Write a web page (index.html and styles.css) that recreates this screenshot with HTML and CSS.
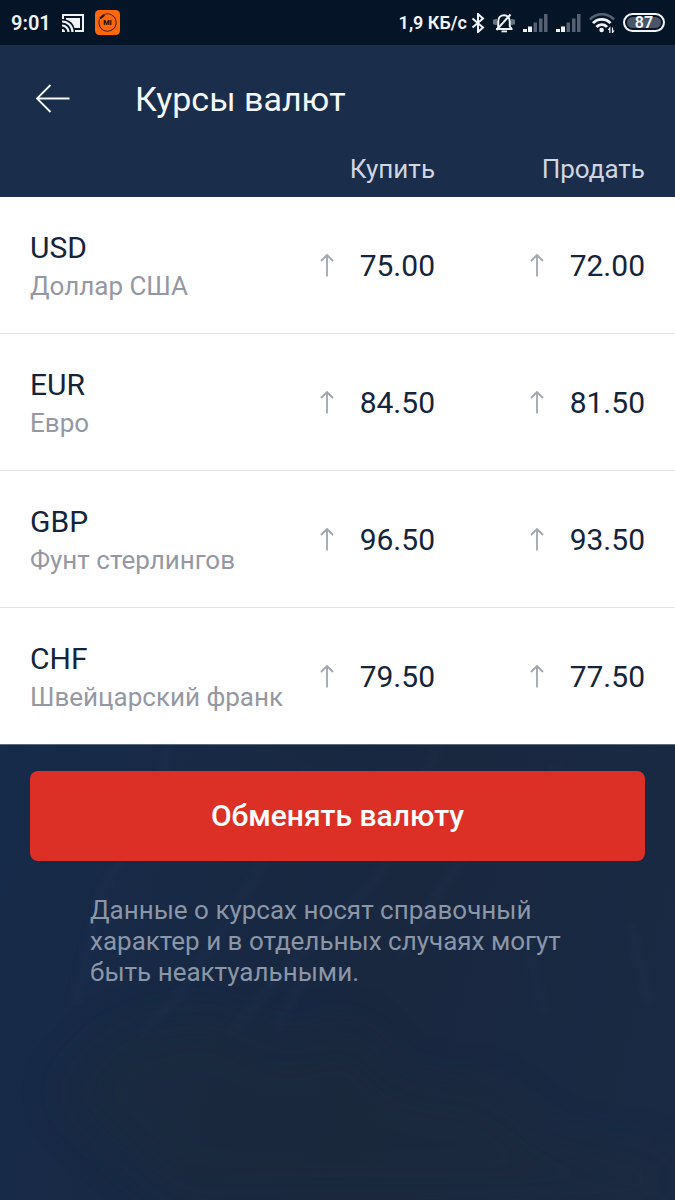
FILE: index.html
```html
<!DOCTYPE html>
<html lang="ru">
<head>
<meta charset="utf-8">
<meta name="viewport" content="width=device-width, initial-scale=1">
<title>Курсы валют</title>
<link rel="stylesheet" href="styles.css">
</head>
<body>
<svg class="symbols" aria-hidden="true">
  <symbol id="up" viewBox="0 0 14 24"><path d="M7 22.500V1.500M1 7l6-6 6 6" fill="none" stroke="currentColor" stroke-width="1.800"/></symbol>
  <symbol id="signal" viewBox="0 0 25 18">
    <path d="M0 15h4v3H0zM5 12.500h4V18H5z" fill="#f0f4fa"/>
    <path d="M10.500 8.500h3.500V18h-3.500zM16 4.500h3.500V18H16zM21 0h3.500v18H21z" fill="#556172"/>
  </symbol>
</svg>

<div class="status">
  <div class="status-left">
    <span class="clock">9:01</span>
    <svg class="cast" width="24" height="20" viewBox="0 0 24 20" aria-label="Трансляция">
      <path d="M2 6V2h20v16h-8" fill="none" stroke="#f0f4fa" stroke-width="2"/>
      <path d="M5 5h14v10h-5.500A12 12 0 0 0 5 6.500z" fill="#f0f4fa"/>
      <path d="M1 8.500A10.500 10.500 0 0 1 11.500 19M1 12.500A6.500 6.500 0 0 1 7.500 19" fill="none" stroke="#f0f4fa" stroke-width="2.200"/>
      <path d="M1 16a3 3 0 0 1 3 3H1z" fill="#f0f4fa"/>
    </svg>
    <svg class="mi" width="25" height="25" viewBox="0 0 24 24" aria-label="Mi">
      <rect width="24" height="24" rx="4" fill="#ff6709"/>
      <path d="M9 4.300A8.300 8.300 0 1 1 4.300 9" fill="none" stroke="#51280f" stroke-width="1"/>
      <path d="M5.500 7.500l2.800-2.300" stroke="#24130b" stroke-width="2.200" stroke-linecap="round"/>
      <text x="12" y="14.500" class="mi-text" text-anchor="middle">MI</text>
    </svg>
  </div>
  <div class="status-right">
    <span class="speed">1,9 КБ/с</span>
    <svg class="bluetooth" width="14" height="20" viewBox="0 0 14 20"><path d="M1.500 5.500l10.500 9L7 19V1l5 4.500-10.500 9" fill="none" stroke="#f0f4fa" stroke-width="2"/></svg>
    <svg class="bell" width="22" height="20" viewBox="0 0 22 20">
      <path d="M3 16h16.500M5.200 15.500V8.500c0-8.500 11.600-8.500 11.600 0v5l2 2.500" fill="none" stroke="#f0f4fa" stroke-width="2"/>
      <path d="M8.500 17.500h5.500v1.800H8.500z" fill="#f0f4fa"/>
      <path d="M1 6.500v5M21 6.500v5M3 6v6M19 6v6" stroke="#8590a0" stroke-width="1.500"/>
      <path d="M3.500 17L17.500 1.500" stroke="#f0f4fa" stroke-width="2"/>
    </svg>
    <svg class="signal" width="25" height="18"><use href="#signal"/></svg>
    <svg class="signal" width="25" height="18"><use href="#signal"/></svg>
    <svg class="wifi" width="26" height="20" viewBox="0 0 26 20">
      <path d="M1 6.500c6.500-7 17.500-7 24 0" fill="none" stroke="#556172" stroke-width="2.600"/>
      <path d="M4 10.200c4.500-5.200 13-5.200 17.500 0M7.500 14c2.600-3.200 8-3.200 10.500 0" fill="none" stroke="#f0f4fa" stroke-width="2.800"/>
      <circle cx="12.600" cy="17" r="2.300" fill="#f0f4fa"/>
      <path d="M20.800 20v-5l-1.500 2M23.500 14.500v5l1.500-2" fill="none" stroke="#f0f4fa" stroke-width="1.200"/>
    </svg>
    <span class="battery">87</span>
  </div>
</div>

<header class="appbar">
  <button class="back" type="button" aria-label="Назад">
    <svg width="36" height="30" viewBox="0 0 36 30"><path d="M34.500 14.500H2M15.500 1L2 14.500 15.500 28" fill="none" stroke="currentColor" stroke-width="1.800"/></svg>
  </button>
  <h1>Курсы валют</h1>
</header>

<table class="rates">
  <colgroup><col><col class="buy"><col class="sell"></colgroup>
  <thead>
    <tr><td></td><th scope="col">Купить</th><th scope="col">Продать</th></tr>
  </thead>
  <tbody>
    <tr>
      <th scope="row"><span class="code">USD</span><span class="name">Доллар США</span></th>
      <td><span class="rate"><svg width="14" height="24"><use href="#up"/></svg>75.00</span></td>
      <td><span class="rate"><svg width="14" height="24"><use href="#up"/></svg>72.00</span></td>
    </tr>
    <tr>
      <th scope="row"><span class="code">EUR</span><span class="name">Евро</span></th>
      <td><span class="rate"><svg width="14" height="24"><use href="#up"/></svg>84.50</span></td>
      <td><span class="rate"><svg width="14" height="24"><use href="#up"/></svg>81.50</span></td>
    </tr>
    <tr>
      <th scope="row"><span class="code">GBP</span><span class="name">Фунт стерлингов</span></th>
      <td><span class="rate"><svg width="14" height="24"><use href="#up"/></svg>96.50</span></td>
      <td><span class="rate"><svg width="14" height="24"><use href="#up"/></svg>93.50</span></td>
    </tr>
    <tr>
      <th scope="row"><span class="code">CHF</span><span class="name">Швейцарский франк</span></th>
      <td><span class="rate"><svg width="14" height="24"><use href="#up"/></svg>79.50</span></td>
      <td><span class="rate"><svg width="14" height="24"><use href="#up"/></svg>77.50</span></td>
    </tr>
  </tbody>
</table>

<main class="bottom">
  <svg class="scenery" viewBox="0 0 675 456" preserveAspectRatio="none" aria-hidden="true">
    <filter id="soft" x="-20%" y="-20%" width="140%" height="140%"><feGaussianBlur stdDeviation="5"/></filter>
    <filter id="haze" x="-20%" y="-40%" width="140%" height="180%"><feGaussianBlur stdDeviation="24"/></filter>
    <g filter="url(#soft)" fill="none" stroke="#3a4f70" stroke-width="6" opacity=".14">
      <path d="M170 0l-15 60-50 80-30 120M310 20l-60 120-70 110-40 40M440 0l-60 130-90 90-60 70M310 225l-35 60M560 20l-90 80-70 110M530 210l15 60M630 180l20 80"/>
    </g>
    <g filter="url(#haze)" fill="#1d2c38" opacity=".4">
      <path d="M60 350l60-60 90-20 80 40 60-30 50 60 90 10 60 50 125 20v36H180z"/>
    </g>
  </svg>
  <button class="exchange" type="button">Обменять валюту</button>
  <p class="note">Данные о курсах носят справочный характер и в отдельных случаях могут быть неактуальными.</p>
</main>
</body>
</html>
```
FILE: styles.css
```css
* {
  box-sizing: border-box;
}

body {
  margin: 0;
  min-height: 100vh;
  display: flex;
  flex-direction: column;
  background: #1a2d4b;
  color: #14243a;
  font-family: Roboto, "Noto Sans", sans-serif;
}

svg {
  display: block;
  flex: none;
}

.symbols {
  position: absolute;
  width: 0;
  height: 0;
}

.status {
  display: flex;
  justify-content: space-between;
  align-items: center;
  height: 45px;
  padding: 0 10px 0 11px;
  background: #061427;
  color: #f0f4fa;
  font-weight: 600;
  white-space: nowrap;
}

.status-left,
.status-right {
  display: flex;
  align-items: center;
}

.status-left {
  gap: 10px;
}

.status-right {
  gap: 8px;
}

.clock {
  font-size: 20px;
}

.speed {
  font-size: 18px;
  margin-right: -4px;
}

.mi-text {
  font-size: 7px;
  font-weight: 900;
  fill: #24130b;
}

.battery {
  width: 42px;
  height: 19px;
  border: 2px solid #f0f4fa;
  border-radius: 10px;
  background: #4a5667;
  box-shadow: inset 0 0 0 2px #061427;
  font-size: 16px;
  line-height: 15px;
  text-align: center;
}

.appbar {
  display: flex;
  align-items: center;
  gap: 64px;
  height: 108px;
  padding: 0 35px;
  color: #f4f7fc;
}

.back {
  padding: 0;
  border: 0;
  background: none;
  color: inherit;
}

h1 {
  margin: 0;
  font-size: 34px;
  line-height: 40px;
  font-weight: 400;
}

.rates {
  width: 100%;
  table-layout: fixed;
  border-spacing: 0;
}

.buy {
  width: 165px;
}

.sell {
  width: 210px;
}

.rates th,
.rates td {
  padding: 0 30px 0 0;
  font-weight: 400;
  text-align: right;
  white-space: nowrap;
}

.rates thead th {
  height: 44px;
  padding-bottom: 12px;
  color: #d0d6e0;
  font-size: 26px;
  line-height: 32px;
}

.rates tbody th,
.rates tbody td {
  height: 137px;
  border-bottom: 1px solid #e3e4e6;
  background: #fff;
}

.rates tbody tr:last-child > * {
  border-bottom-color: #5d6b7e;
}

.rates tbody th {
  padding: 4px 0 0 30px;
  text-align: left;
}

.code,
.name {
  display: block;
  line-height: 38px;
}

.code {
  font-size: 30px;
}

.name {
  color: #9498a2;
  font-size: 26px;
}

.rates tbody td {
  padding-top: 2px;
  font-size: 30px;
  line-height: 36px;
}

.rate {
  display: flex;
  justify-content: flex-end;
  align-items: center;
  gap: 26px;
}

.rate svg {
  color: #a0a5ae;
}

.bottom {
  position: relative;
  flex: 1;
  padding: 26px 30px;
  background: linear-gradient(105deg, #162b4a, #19273f 55%, #1a2a44);
}

.scenery {
  position: absolute;
  inset: 0;
  width: 100%;
  height: 100%;
}

.exchange {
  position: relative;
  display: block;
  width: 100%;
  height: 90px;
  border: 0;
  border-radius: 8px;
  background: #dc3027;
  color: #fff;
  font: 500 30px/36px Roboto, "Noto Sans", sans-serif;
}

.note {
  position: relative;
  margin: 34px 60px 0;
  color: #8b96a7;
  font-size: 26px;
  line-height: 31px;
}
```
